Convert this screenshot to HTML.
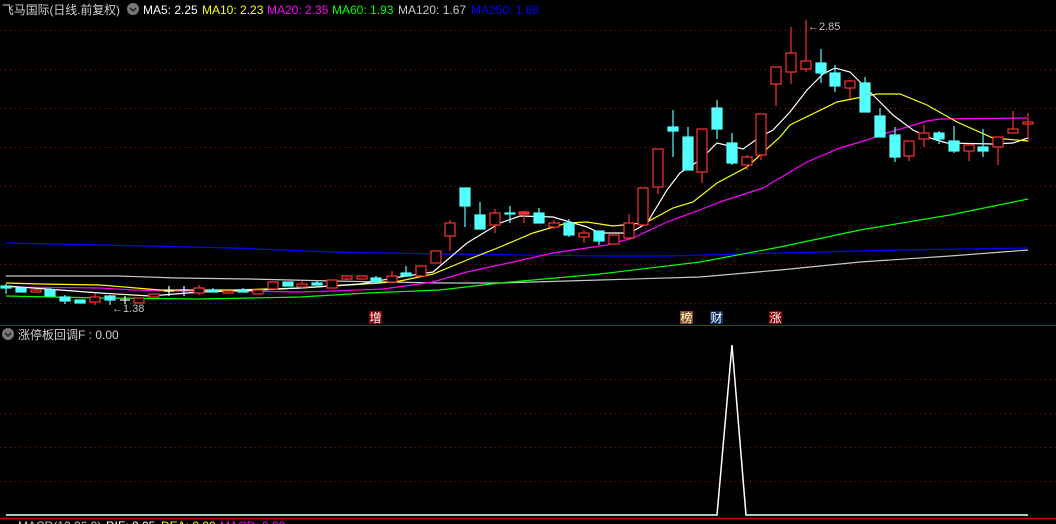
<!DOCTYPE html>
<html><head><meta charset="utf-8"><style>
html,body{margin:0;padding:0;background:#000;width:1056px;height:524px;overflow:hidden}
svg{display:block}
text{font-family:"Liberation Sans","Noto Sans CJK SC",sans-serif}
</style></head><body>
<svg width="1056" height="524" viewBox="0 0 1056 524" xmlns="http://www.w3.org/2000/svg">
<rect width="1056" height="524" fill="#000"/>
<g stroke="#8a1010" stroke-width="1" stroke-dasharray="1,4">
<line x1="0" y1="30.5" x2="1056" y2="30.5"/><line x1="0" y1="69.5" x2="1056" y2="69.5"/>
<line x1="0" y1="108.5" x2="1056" y2="108.5"/><line x1="0" y1="147.5" x2="1056" y2="147.5"/>
<line x1="0" y1="186.5" x2="1056" y2="186.5"/><line x1="0" y1="225.5" x2="1056" y2="225.5"/>
<line x1="0" y1="264.5" x2="1056" y2="264.5"/><line x1="0" y1="303.5" x2="1056" y2="303.5"/>
<line x1="0" y1="379.5" x2="1056" y2="379.5"/><line x1="0" y1="413.5" x2="1056" y2="413.5"/>
<line x1="0" y1="447.5" x2="1056" y2="447.5"/><line x1="0" y1="481.5" x2="1056" y2="481.5"/>
</g>
<line x1="0" y1="325.5" x2="1056" y2="325.5" stroke="#b00000"/>
<line x1="0" y1="518.5" x2="1056" y2="518.5" stroke="#c00000" stroke-width="1.5"/>

<g fill="none" stroke-width="1.2">
<polyline stroke="#0000ff" points="6,243 100,245 233,248 333,252 440,254 607,256 667,256 780,253 900,250 1028,248"/>
<polyline stroke="#c8c8c8" points="6,276 117,276 177,278 250,279 333,281 440,283 500,283 600,280 700,277 780,270 860,262 950,256 1028,250"/>
<polyline stroke="#00ff00" points="6,296 100,298 200,299 300,297 367,293 440,290 500,283 600,274 700,262 780,247 860,230 950,215 1028,199"/>
<polyline stroke="#ff00ff" points="6,287 100,288 133,290 167,291 233,291 300,292 333,291 383,289 433,282 467,272 513,262 553,253 607,245 633,238 667,222 700,210 720,202 763,188 807,162 840,148 867,140 887,133 907,127 927,121 940,119 1027,118"/>
<polyline stroke="#ffff00" points="6,283 40,284 100,285 160,290 233,290 300,288 380,283 400,281 433,274 467,260 500,247 533,233 567,223 587,222 613,226 633,224 647,222 673,208 693,202 717,183 747,167 780,137 790,125 837,102 877,94 900,94 927,105 957,122 993,138 1028,141"/>
<polyline stroke="#ffffff" points="6,286 60,290 100,293 150,296 200,292 260,290 300,288 360,284 400,277 433,272 467,243 500,223 520,216 553,217 587,227 600,233 630,233 647,223 667,190 680,173 700,160 717,143 743,149 760,137 773,130 790,112 807,90 823,74 835,68 850,72 873,95 893,115 913,130 933,139 947,143 993,144 1013,143 1028,138"/>
</g>

<g stroke="#ff3232" stroke-width="1.2" fill="#000">
<line x1="36" y1="289" x2="36" y2="293"/><rect x="31" y="290" width="10" height="2"/>
<line x1="95" y1="293" x2="95" y2="305"/><rect x="90" y="297" width="10" height="5"/>
<rect x="134" y="298" width="10" height="5"/>
<rect x="149" y="294" width="10" height="3"/>
<line x1="199" y1="285" x2="199" y2="295"/><rect x="194" y="288" width="10" height="5"/>
<rect x="223" y="291" width="10" height="2"/>
<rect x="253" y="290" width="10" height="4"/>
<rect x="268" y="282" width="10" height="7"/>
<line x1="302" y1="281" x2="302" y2="288"/><rect x="297" y="284" width="10" height="3"/>
<rect x="327" y="280" width="10" height="8"/>
<line x1="347" y1="275" x2="347" y2="280"/><rect x="342" y="276" width="10" height="3"/>
<rect x="357" y="276" width="10" height="3"/>
<line x1="392" y1="271" x2="392" y2="282"/><rect x="387" y="276" width="10" height="6"/>
<rect x="416" y="266" width="10" height="10"/>
<rect x="431" y="251" width="10" height="12"/>
<line x1="450" y1="220" x2="450" y2="251"/><rect x="445" y="223" width="10" height="13"/>
<line x1="495" y1="209" x2="495" y2="233"/><rect x="490" y="213" width="10" height="12"/>
<line x1="524" y1="211" x2="524" y2="223"/><rect x="519" y="212" width="10" height="2" fill="#ff3232"/>
<line x1="554" y1="220" x2="554" y2="229"/><rect x="549" y="223" width="10" height="4"/>
<line x1="584" y1="230" x2="584" y2="243"/><rect x="579" y="233" width="10" height="4"/>
<rect x="609" y="235" width="10" height="9"/>
<line x1="629" y1="214" x2="629" y2="240"/><rect x="624" y="223" width="10" height="15"/>
<rect x="638" y="188" width="10" height="37"/>
<line x1="658" y1="149" x2="658" y2="194"/><rect x="653" y="149" width="10" height="38"/>
<line x1="702" y1="129" x2="702" y2="183"/><rect x="697" y="129" width="10" height="43"/>
<line x1="747" y1="155" x2="747" y2="170"/><rect x="742" y="157" width="10" height="8"/>
<line x1="761" y1="114" x2="761" y2="160"/><rect x="756" y="114" width="10" height="41"/>
<line x1="776" y1="67" x2="776" y2="106"/><rect x="771" y="67" width="10" height="17"/>
<line x1="791" y1="27" x2="791" y2="84"/><rect x="786" y="53" width="10" height="19"/>
<line x1="806" y1="20" x2="806" y2="72"/><rect x="801" y="61" width="10" height="8"/>
<line x1="850" y1="80" x2="850" y2="99"/><rect x="845" y="81" width="10" height="7"/>
<line x1="909" y1="141" x2="909" y2="161"/><rect x="904" y="141" width="10" height="15"/>
<line x1="924" y1="125" x2="924" y2="147"/><rect x="919" y="133" width="10" height="6"/>
<line x1="969" y1="145" x2="969" y2="161"/><rect x="964" y="145" width="10" height="6"/>
<line x1="998" y1="137" x2="998" y2="165"/><rect x="993" y="137" width="10" height="10"/>
<line x1="1013" y1="111" x2="1013" y2="133"/><rect x="1008" y="129" width="10" height="4"/>
<line x1="1028" y1="113" x2="1028" y2="142"/><rect x="1023" y="122" width="10" height="2"/>
</g>
<g stroke="#54ffff" stroke-width="1.2" fill="#54ffff">
<line x1="6" y1="284" x2="6" y2="294"/><rect x="1" y="286" width="10" height="2"/>
<rect x="16" y="288" width="10" height="4"/>
<line x1="50" y1="288" x2="50" y2="296"/><rect x="45" y="290" width="10" height="6"/>
<line x1="65" y1="295" x2="65" y2="304"/><rect x="60" y="297" width="10" height="4"/>
<rect x="75" y="300" width="10" height="3"/>
<line x1="110" y1="295" x2="110" y2="305"/><rect x="105" y="296" width="10" height="4"/>
<line x1="213" y1="288" x2="213" y2="292"/><rect x="208" y="290" width="10" height="2"/>
<line x1="243" y1="288" x2="243" y2="292"/><rect x="238" y="290" width="10" height="2"/>
<rect x="283" y="282" width="10" height="4"/>
<line x1="317" y1="281" x2="317" y2="285"/><rect x="312" y="283" width="10" height="2"/>
<line x1="376" y1="276" x2="376" y2="282"/><rect x="371" y="278" width="10" height="4"/>
<line x1="406" y1="266" x2="406" y2="276"/><rect x="401" y="273" width="10" height="3"/>
<line x1="465" y1="188" x2="465" y2="227"/><rect x="460" y="188" width="10" height="18"/>
<line x1="480" y1="202" x2="480" y2="229"/><rect x="475" y="215" width="10" height="14"/>
<line x1="510" y1="206" x2="510" y2="223"/><rect x="505" y="213" width="10" height="1"/>
<line x1="539" y1="208" x2="539" y2="223"/><rect x="534" y="213" width="10" height="10"/>
<line x1="569" y1="219" x2="569" y2="237"/><rect x="564" y="223" width="10" height="12"/>
<line x1="599" y1="231" x2="599" y2="245"/><rect x="594" y="231" width="10" height="10"/>
<line x1="673" y1="110" x2="673" y2="157"/><rect x="668" y="127" width="10" height="4"/>
<line x1="688" y1="127" x2="688" y2="170"/><rect x="683" y="137" width="10" height="33"/>
<line x1="717" y1="100" x2="717" y2="139"/><rect x="712" y="108" width="10" height="21"/>
<line x1="732" y1="133" x2="732" y2="165"/><rect x="727" y="143" width="10" height="20"/>
<line x1="821" y1="49" x2="821" y2="83"/><rect x="816" y="63" width="10" height="10"/>
<line x1="835" y1="65" x2="835" y2="92"/><rect x="830" y="73" width="10" height="13"/>
<line x1="865" y1="77" x2="865" y2="112"/><rect x="860" y="83" width="10" height="29"/>
<line x1="880" y1="108" x2="880" y2="137"/><rect x="875" y="116" width="10" height="21"/>
<line x1="895" y1="127" x2="895" y2="162"/><rect x="890" y="135" width="10" height="22"/>
<line x1="939" y1="131" x2="939" y2="144"/><rect x="934" y="133" width="10" height="6"/>
<line x1="954" y1="126" x2="954" y2="153"/><rect x="949" y="141" width="10" height="10"/>
<line x1="983" y1="129" x2="983" y2="157"/><rect x="978" y="147" width="10" height="4"/>
</g>
<g stroke="#fff" stroke-width="1.2">
<line x1="120" y1="300" x2="130" y2="300"/><line x1="125" y1="296" x2="125" y2="304"/>
<line x1="164" y1="291" x2="174" y2="291"/><line x1="169" y1="286" x2="169" y2="296"/>
<line x1="179" y1="290" x2="189" y2="290"/><line x1="184" y1="286" x2="184" y2="296"/>
</g>

<text x="112" y="312" font-size="11" fill="#c0c0c0">←1.38</text>
<text x="808" y="30" font-size="11" fill="#c0c0c0">←2.85</text>
<rect x="369" y="311" width="13" height="13" fill="#8a0000"/><text x="369.5" y="322" font-size="12" fill="#fff">增</text>
<rect x="680" y="311" width="13" height="13" fill="#8b4a10"/><text x="680.5" y="322" font-size="12" fill="#fff">榜</text>
<rect x="710" y="311" width="13" height="13" fill="#0b2f66"/><text x="710.5" y="322" font-size="12" fill="#fff">财</text>
<rect x="769" y="311" width="13" height="13" fill="#8a0000"/><text x="769.5" y="322" font-size="12" fill="#fff">涨</text>

<text x="2" y="14" font-size="12" fill="#d0d0d0" textLength="118" lengthAdjust="spacingAndGlyphs">飞马国际(日线.前复权)</text>
<circle cx="133" cy="9" r="6" fill="#777"/><path d="M130 8 L133 11 L136 8" stroke="#222" stroke-width="1.5" fill="none"/>
<text x="143" y="14" font-size="12" fill="#fff">MA5: 2.25</text>
<text x="202" y="14" font-size="12" fill="#ffff00">MA10: 2.23</text>
<text x="267" y="14" font-size="12" fill="#ff00ff">MA20: 2.35</text>
<text x="332" y="14" font-size="12" fill="#00ff00">MA60: 1.93</text>
<text x="398" y="14" font-size="12" fill="#c8c8c8">MA120: 1.67</text>
<text x="471" y="14" font-size="12" fill="#0000ff">MA250: 1.68</text>

<circle cx="8" cy="334" r="6" fill="#777"/><path d="M5 333 L8 336 L11 333" stroke="#222" stroke-width="1.5" fill="none"/>
<text x="18" y="339" font-size="12" fill="#d0d0d0">涨停板回调F : 0.00</text>
<polyline fill="none" stroke="#fff" stroke-width="1.5" points="6,515 717,515 732,345 746,515 1028,515"/>
<text x="18" y="530" font-size="12" fill="#c8c8c8">MACD(12,26,9)</text>
<text x="106" y="530" font-size="12" fill="#fff">DIF: 0.05</text>
<text x="161" y="530" font-size="12" fill="#ffff00">DEA: 0.00</text>
<text x="220" y="530" font-size="12" fill="#ff00ff">MACD: 0.00</text>
</svg>
</body></html>
